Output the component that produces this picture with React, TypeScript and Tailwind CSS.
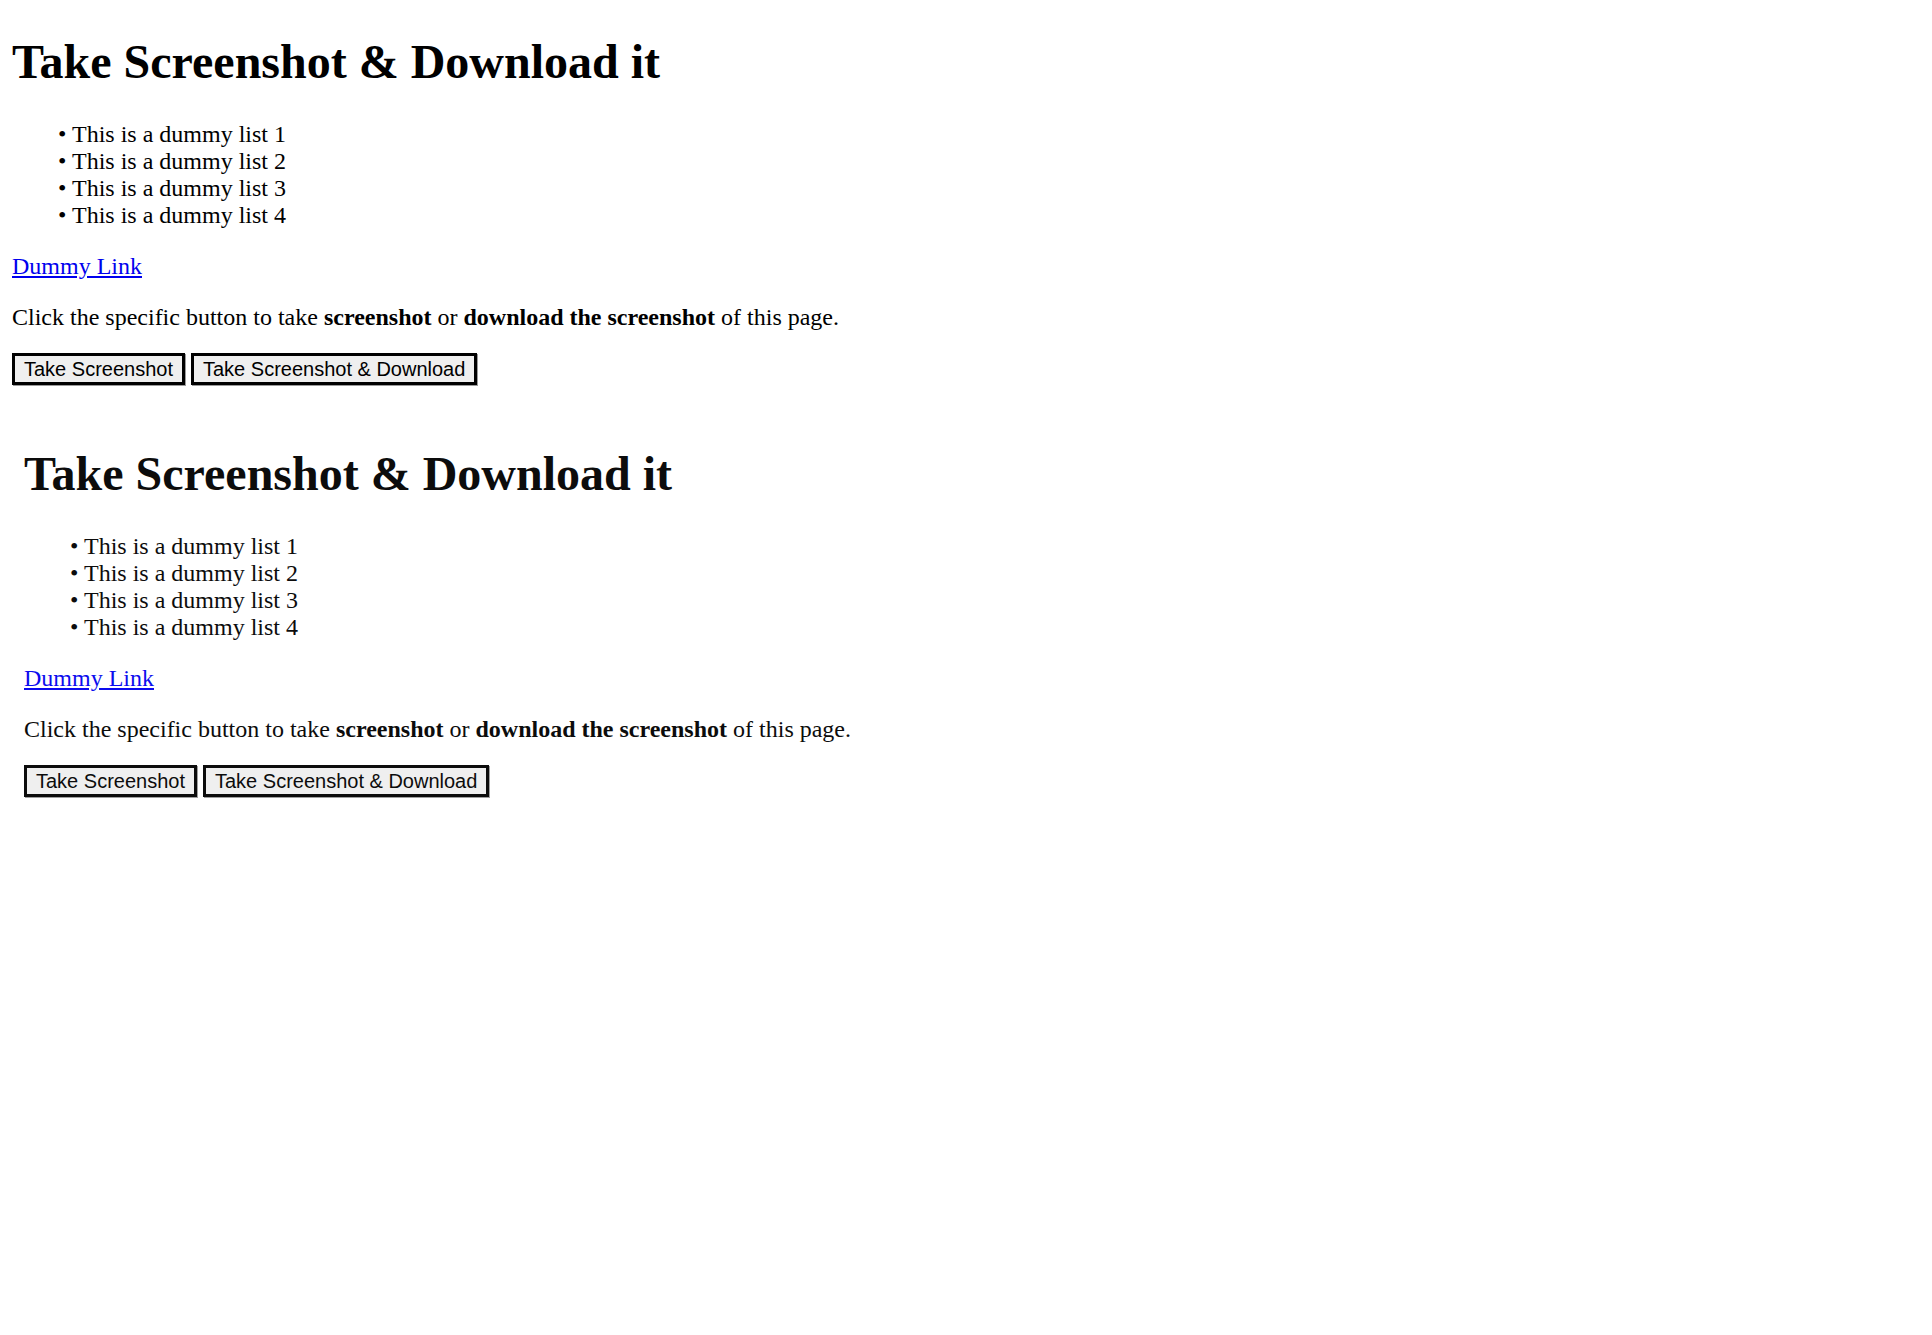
import React from "react";

const items = ["This is a dummy list 1", "This is a dummy list 2", "This is a dummy list 3", "This is a dummy list 4"];

function Content() {
  return (
    <div>
      <h1 className="m-0 text-[48px] font-bold leading-[normal]">Take Screenshot &amp; Download it</h1>
      <ul className="mt-[32px] mb-0 pl-[60px] list-none text-[24px] leading-[normal]">
        {items.map((t) => (
          <li key={t}>
            <span className="inline-block w-[14px] -ml-[14px]">•</span>
            {t}
          </li>
        ))}
      </ul>
      <p className="mt-[24px] text-[24px] leading-[normal]">
        <a href="#" className="text-[#0000ee] underline">Dummy Link</a>
      </p>
      <p className="mt-[24px] text-[24px] leading-[normal]">
        Click the specific button to take <b className="font-bold">screenshot</b> or{" "}
        <b className="font-bold">download the screenshot</b> of this page.
      </p>
      <div className="mt-[22px] text-[24px] leading-[normal]">
        <button className="bg-[#efefef] border-[3px] border-solid border-black px-[9px] py-[1.5px] text-[20px] leading-[normal] text-black font-['Liberation_Sans',Arial,sans-serif] shadow-[1px_1px_0_#9a9a9a] align-baseline">
          Take Screenshot
        </button>{" "}
        <button className="bg-[#efefef] border-[3px] border-solid border-black px-[9px] py-[1.5px] text-[20px] leading-[normal] text-black font-['Liberation_Sans',Arial,sans-serif] shadow-[1px_1px_0_#9a9a9a] align-baseline">
          Take Screenshot &amp; Download
        </button>
      </div>
    </div>
  );
}

export default function App() {
  return (
    <div className="min-h-[1335px] bg-white text-black font-['Liberation_Serif','Times_New_Roman',serif] leading-[normal]">
      <div className="px-[12px] pt-[34px]">
        <Content />
      </div>
      <div className="pl-[24px] pt-[61px]">
        <div className="opacity-95">
          <Content />
        </div>
      </div>
    </div>
  );
}
